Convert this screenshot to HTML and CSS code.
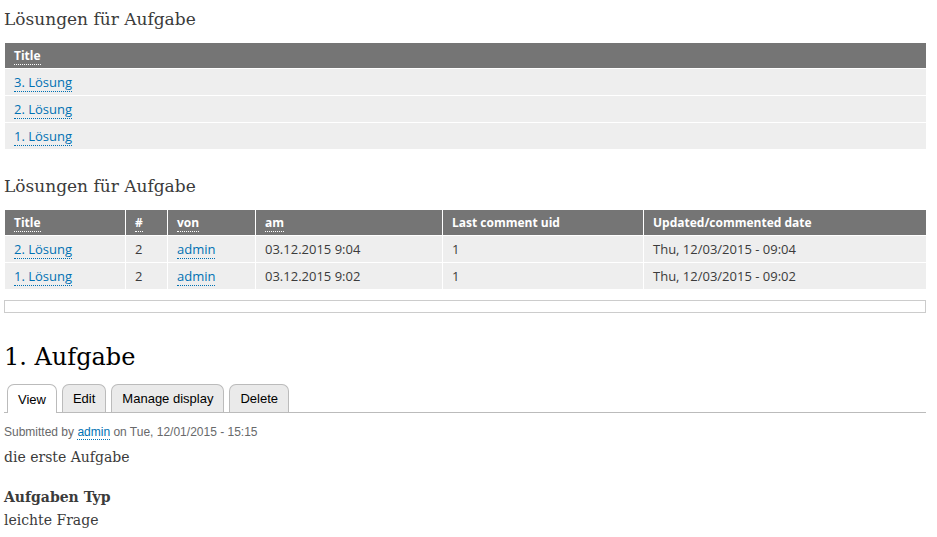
FILE: index.html
```html
<!DOCTYPE html>
<html lang="de">
<head>
<meta charset="utf-8">
<title>1. Aufgabe</title>
<link rel="stylesheet" href="styles.css">
</head>
<body>
<div class="page">
  <section class="view">
    <h2 class="view-title">Lösungen für Aufgabe</h2>
    <table class="grid">
      <thead>
        <tr><th><span class="sort">Title</span></th></tr>
      </thead>
      <tbody>
        <tr><td><a href="#">3. Lösung</a></td></tr>
        <tr><td><a href="#">2. Lösung</a></td></tr>
        <tr><td><a href="#">1. Lösung</a></td></tr>
      </tbody>
    </table>
  </section>

  <section class="view">
    <h2 class="view-title">Lösungen für Aufgabe</h2>
    <table class="grid grid-cols">
      <thead>
        <tr>
          <th class="c-title"><span class="sort">Title</span></th>
          <th class="c-num"><span class="sort">#</span></th>
          <th class="c-von"><span class="sort">von</span></th>
          <th class="c-am"><span class="sort">am</span></th>
          <th class="c-uid">Last comment uid</th>
          <th class="c-date">Updated/commented date</th>
        </tr>
      </thead>
      <tbody>
        <tr>
          <td><a href="#">2. Lösung</a></td>
          <td>2</td>
          <td><a href="#">admin</a></td>
          <td>03.12.2015 9:04</td>
          <td>1</td>
          <td>Thu, 12/03/2015 - 09:04</td>
        </tr>
        <tr>
          <td><a href="#">1. Lösung</a></td>
          <td>2</td>
          <td><a href="#">admin</a></td>
          <td>03.12.2015 9:02</td>
          <td>1</td>
          <td>Thu, 12/03/2015 - 09:02</td>
        </tr>
      </tbody>
    </table>
    <div class="empty-box"></div>
  </section>

  <article class="node">
    <h1 class="node-title">1. Aufgabe</h1>
    <ul class="tabs">
      <li class="tab active"><a href="#">View</a></li>
      <li class="tab"><a href="#">Edit</a></li>
      <li class="tab"><a href="#">Manage display</a></li>
      <li class="tab"><a href="#">Delete</a></li>
    </ul>
    <div class="submitted">Submitted by <a href="#">admin</a> on Tue, 12/01/2015 - 15:15</div>
    <p class="body-text">die erste Aufgabe</p>
    <div class="field">
      <div class="field-label">Aufgaben Typ</div>
      <div class="field-item">leichte Frage</div>
    </div>
    <div class="field">
      <div class="field-label">Aufgaben Gruppe</div>
      <div class="field-item">Gruppe</div>
    </div>
  </article>
</div>
</body>
</html>
```

FILE: styles.css
```css
html, body {
  margin: 0;
  padding: 0;
  background: #fff;
}
body {
  font-family: "DejaVu Serif", Georgia, serif;
  color: #3b3b3b;
  overflow: hidden;
}
.page {
  padding: 0 11px 0 4px;
}
a {
  color: #0071b3;
  text-decoration: none;
}
.view-title {
  font-family: "DejaVu Serif", Georgia, serif;
  font-weight: normal;
  font-size: 17px;
  line-height: 24px;
  margin: 7px 0 0 0;
  height: 36px;
  color: #3b3b3b;
}
.view + .view .view-title {
  margin-top: 0;
}
.grid {
  width: 921px;
  margin-left: 1px;
  border-collapse: collapse;
  font-family: "Open Sans", "DejaVu Sans", sans-serif;
  font-size: 13px;
  margin-bottom: 24px;
}
.grid th {
  background: #757575;
  color: #fff;
  font-weight: bold;
  font-size: 12px;
  text-align: left;
  height: 25px;
  padding: 0 9px;
  border-bottom: 1px solid #fff;
  border-left: 1px solid #fff;
}
.grid td {
  background: #eeeeee;
  height: 26px;
  padding: 0 9px;
  border-bottom: 1px solid #fff;
  border-left: 1px solid #fff;
  color: #3b3b3b;
}
.grid th:first-child,
.grid td:first-child {
  border-left: 0;
}
.grid td a {
  border-bottom: 1px dotted #0071b3;
}
.sort {
  border-bottom: 1px dotted #fff;
}
.grid-cols {
  margin-bottom: 10px;
}
.c-title { width: 102px; }
.c-num { width: 23px; }
.c-von { width: 69px; }
.c-am { width: 168px; }
.c-uid { width: 182px; }
.empty-box {
  height: 11px;
  border: 1px solid #ccc;
  margin-bottom: 29px;
}
.node-title {
  font-family: "DejaVu Serif", Georgia, serif;
  font-weight: normal;
  font-size: 24px;
  line-height: 30px;
  margin: 0 0 12px 0;
  color: #000;
}
.tabs {
  list-style: none;
  margin: 0;
  padding: 0 0 0 3px;
  display: flex;
  gap: 5px;
  border-bottom: 1px solid #bbb;
  height: 28px;
  font-family: "Liberation Sans", Arial, sans-serif;
  font-size: 13px;
}
.tab {
  height: 28px;
  border: 1px solid #bbb;
  border-bottom: 0;
  border-radius: 7px 7px 0 0;
  background: #eaeaea;
  box-sizing: border-box;
  display: flex;
  align-items: center;
  padding: 0 10px;
}
.tab a {
  color: #000;
}
.tab.active {
  background: #fff;
  height: 29px;
  margin-bottom: -1px;
}
.submitted {
  font-family: "Liberation Sans", Arial, sans-serif;
  font-size: 12px;
  color: #68696b;
  margin: 11px 0 0 0;
  line-height: 16px;
}
.submitted a {
  border-bottom: 1px dotted #0071b3;
}
.body-text {
  font-size: 14px;
  margin: 7px 0 0 0;
  line-height: 20px;
}
.field {
  font-size: 14px;
  line-height: 23px;
  margin-top: 19px;
}
.field + .field {
  margin-top: 0;
}
.field-label {
  font-weight: bold;
}
```
